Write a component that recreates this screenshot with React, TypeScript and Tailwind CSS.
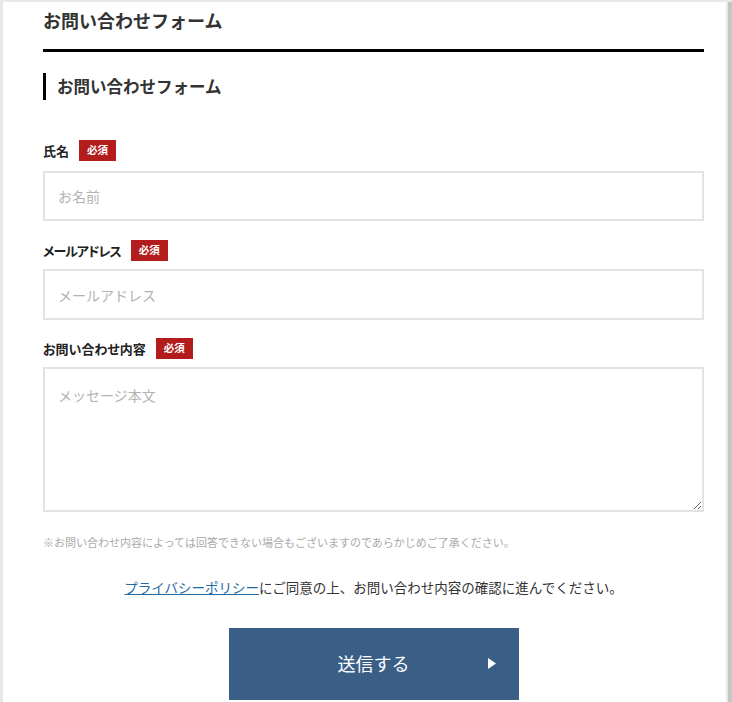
const jp = "font-['Noto_Sans_CJK_JP','Noto_Sans',sans-serif]";

function Required() {
  return (
    <span className="ml-[10px] inline-flex h-[21px] w-[37px] items-center justify-center bg-[#b31c1c] text-[10.5px] font-bold leading-none text-white">
      必須
    </span>
  );
}

function FieldLabel({ children, tight }: { children: string; tight?: boolean }) {
  return (
    <div className="flex h-[21px] items-center">
      <span
        className={
          tight
            ? "text-[13px] font-bold leading-none tracking-[-1px] text-[#222] [font-feature-settings:'palt']"
            : "text-[13px] font-bold leading-none text-[#222] [font-feature-settings:'palt']"
        }
      >
        {children}
      </span>
      <Required />
    </div>
  );
}

export default function App() {
  return (
    <div className={`${jp} flex min-h-[702px] bg-[#e8e8e8] pl-[3px] pt-[2px]`}>
      {/* card */}
      <div className="w-[723px] bg-white pl-[40px] pr-[22px] pt-[5px]">
        <h1 className="border-b-[3px] border-black pb-[16px] text-[18px] font-bold leading-[26px] text-[#333]">
          お問い合わせフォーム
        </h1>

        <h2 className="mt-[21px] border-l-[3px] border-black pl-[11px] text-[16.5px] font-bold leading-[27px] text-[#333]">
          お問い合わせフォーム
        </h2>

        <form className="mt-[40px]">
          <FieldLabel>氏名</FieldLabel>
          <input
            type="text"
            placeholder="お名前"
            className="mt-[10px] block h-[50px] w-full border-2 border-[#e3e3e3] px-[13px] text-[14px] text-[#333] outline-none placeholder:text-[#b3b3b3]"
          />

          <div className="mt-[19px]">
            <FieldLabel tight>メールアドレス</FieldLabel>
          </div>
          <input
            type="email"
            placeholder="メールアドレス"
            className="mt-[8px] block h-[51px] w-full border-2 border-[#e3e3e3] px-[13px] text-[14px] text-[#333] outline-none placeholder:text-[#b3b3b3]"
          />

          <div className="mt-[18px]">
            <FieldLabel>お問い合わせ内容</FieldLabel>
          </div>
          <textarea
            placeholder="メッセージ本文"
            className="mt-[8px] block h-[145px] w-full border-2 border-[#e3e3e3] px-[13px] pt-[16px] text-[14px] leading-[21px] text-[#333] outline-none placeholder:text-[#b3b3b3]"
          />

          <p className="mt-[22px] text-[11px] leading-[16px] text-[#aaa]">
            ※お問い合わせ内容によっては回答できない場合もございますのであらかじめご了承ください。
          </p>

          <p className="mt-[27px] text-center text-[13.5px] leading-[20px] text-[#333]">
            <a href="#" className="text-[#1f6aa5] underline">
              プライバシーポリシー
            </a>
            にご同意の上、お問い合わせ内容の確認に進んでください。
          </p>

          <div className="mt-[31px] flex justify-center">
            <button
              type="button"
              className="relative flex h-[72px] w-[290px] items-center justify-center pb-[2px] bg-[#3b5e87] text-[18px] leading-[26px] text-white"
            >
              送信する
              <svg
                className="absolute left-[259px] top-[30px]"
                width="8"
                height="11"
                viewBox="0 0 8 11"
              >
                <path d="M0 0 L8 5.5 L0 11 Z" fill="#fff" />
              </svg>
            </button>
          </div>
        </form>
      </div>
      <div className="ml-[2px] w-[4px] bg-[#c6c6c6]" />
    </div>
  );
}
